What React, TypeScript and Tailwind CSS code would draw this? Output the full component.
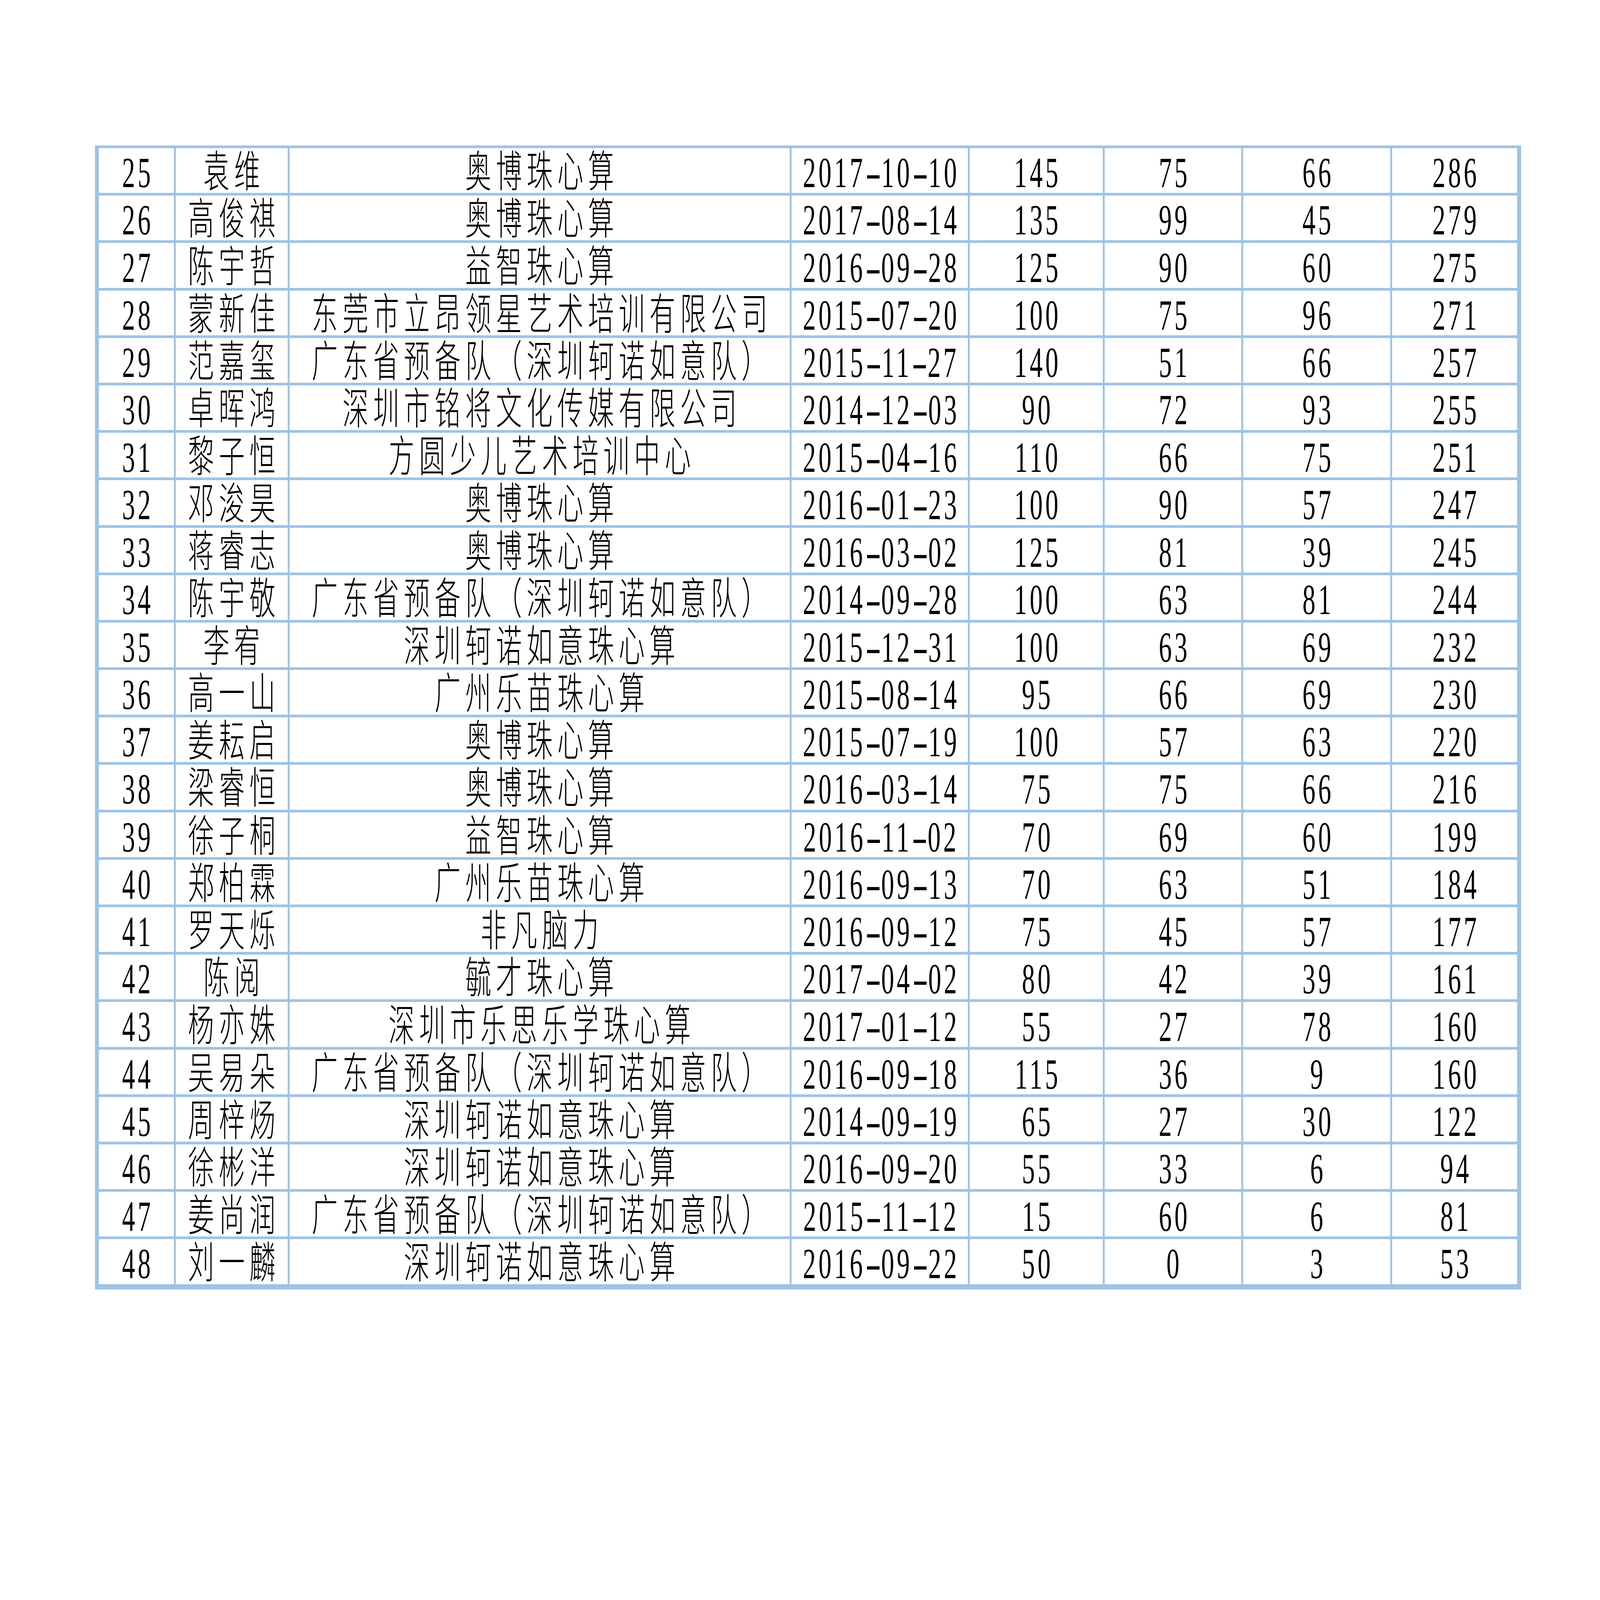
import React from "react";

type Row = [string, string, string, string, string, string, string, string];

const rows: Row[] = [
  ["25", "袁维", "奥博珠心算", "2017-10-10", "145", "75", "66", "286"],
  ["26", "高俊祺", "奥博珠心算", "2017-08-14", "135", "99", "45", "279"],
  ["27", "陈宇哲", "益智珠心算", "2016-09-28", "125", "90", "60", "275"],
  ["28", "蒙新佳", "东莞市立昂领星艺术培训有限公司", "2015-07-20", "100", "75", "96", "271"],
  ["29", "范嘉玺", "广东省预备队（深圳轲诺如意队）", "2015-11-27", "140", "51", "66", "257"],
  ["30", "卓晖鸿", "深圳市铭将文化传媒有限公司", "2014-12-03", "90", "72", "93", "255"],
  ["31", "黎子恒", "方圆少儿艺术培训中心", "2015-04-16", "110", "66", "75", "251"],
  ["32", "邓浚昊", "奥博珠心算", "2016-01-23", "100", "90", "57", "247"],
  ["33", "蒋睿志", "奥博珠心算", "2016-03-02", "125", "81", "39", "245"],
  ["34", "陈宇敬", "广东省预备队（深圳轲诺如意队）", "2014-09-28", "100", "63", "81", "244"],
  ["35", "李宥", "深圳轲诺如意珠心算", "2015-12-31", "100", "63", "69", "232"],
  ["36", "高一山", "广州乐苗珠心算", "2015-08-14", "95", "66", "69", "230"],
  ["37", "姜耘启", "奥博珠心算", "2015-07-19", "100", "57", "63", "220"],
  ["38", "梁睿恒", "奥博珠心算", "2016-03-14", "75", "75", "66", "216"],
  ["39", "徐子桐", "益智珠心算", "2016-11-02", "70", "69", "60", "199"],
  ["40", "郑柏霖", "广州乐苗珠心算", "2016-09-13", "70", "63", "51", "184"],
  ["41", "罗天烁", "非凡脑力", "2016-09-12", "75", "45", "57", "177"],
  ["42", "陈阅", "毓才珠心算", "2017-04-02", "80", "42", "39", "161"],
  ["43", "杨亦姝", "深圳市乐思乐学珠心算", "2017-01-12", "55", "27", "78", "160"],
  ["44", "吴易朵", "广东省预备队（深圳轲诺如意队）", "2016-09-18", "115", "36", "9", "160"],
  ["45", "周梓炀", "深圳轲诺如意珠心算", "2014-09-19", "65", "27", "30", "122"],
  ["46", "徐彬洋", "深圳轲诺如意珠心算", "2016-09-20", "55", "33", "6", "94"],
  ["47", "姜尚润", "广东省预备队（深圳轲诺如意队）", "2015-11-12", "15", "60", "6", "81"],
  ["48", "刘一麟", "深圳轲诺如意珠心算", "2016-09-22", "50", "0", "3", "53"],
];

const PAGE_W = 6735;
const PAGE_H = 4762;

function useFitScale() {
  const [s, setS] = React.useState({ x: 1, y: 1 });
  React.useLayoutEffect(() => {
    const update = () =>
      setS({
        x: Math.min(1, window.innerWidth / PAGE_W),
        y: Math.min(1, window.innerHeight / PAGE_H),
      });
    update();
    window.addEventListener("resize", update);
    return () => window.removeEventListener("resize", update);
  }, []);
  return s;
}

function Num({ children }: { children: React.ReactNode }) {
  return (
    <span className="inline-block scale-x-[0.85] tracking-[13px] pl-[13px]">{children}</span>
  );
}

function Han({ children }: { children: React.ReactNode }) {
  return (
    <span className="inline-block scale-x-[0.85] tracking-[23px] pl-[23px]">{children}</span>
  );
}

function DateText({ value }: { value: string }) {
  const parts = value.split("-");
  return (
    <Num>
      {parts.map((p, i) => (
        <React.Fragment key={i}>
          {i > 0 && (
            <span className="inline-block w-[78px] text-center tracking-normal scale-x-[1.85]">-</span>
          )}
          {p}
        </React.Fragment>
      ))}
    </Num>
  );
}

function Cell({ children }: { children: React.ReactNode }) {
  return (
    <div className="bg-white flex justify-center items-start pt-[8px] text-[129px] leading-none text-black font-light whitespace-nowrap">
      {children}
    </div>
  );
}

export default function App() {
  const s = useFitScale();
  return (
    <div className="w-screen h-screen overflow-hidden bg-white">
      <div
        className="w-[6735px] h-[4762px] origin-top-left bg-white pt-[433px] pl-[400px]"
        style={{
          fontFamily: '"Liberation Serif", "Noto Sans CJK SC", serif',
          transform: `scale(${s.x}, ${s.y})`,
        }}
      >
        <div className="grid w-fit grid-cols-[316px_471px_2105px_742px_560px_575px_619px_526px] auto-rows-[133.2px] gap-[8px] bg-[#9dc3e6] pt-[8px] pl-[16px] pr-[17px] pb-[16px]">
          {rows.map((r) => (
            <React.Fragment key={r[0]}>
              <Cell><Num>{r[0]}</Num></Cell>
              <Cell><Han>{r[1]}</Han></Cell>
              <Cell><Han>{r[2]}</Han></Cell>
              <Cell><DateText value={r[3]} /></Cell>
              <Cell><Num>{r[4]}</Num></Cell>
              <Cell><Num>{r[5]}</Num></Cell>
              <Cell><Num>{r[6]}</Num></Cell>
              <Cell><Num>{r[7]}</Num></Cell>
            </React.Fragment>
          ))}
        </div>
      </div>
    </div>
  );
}
